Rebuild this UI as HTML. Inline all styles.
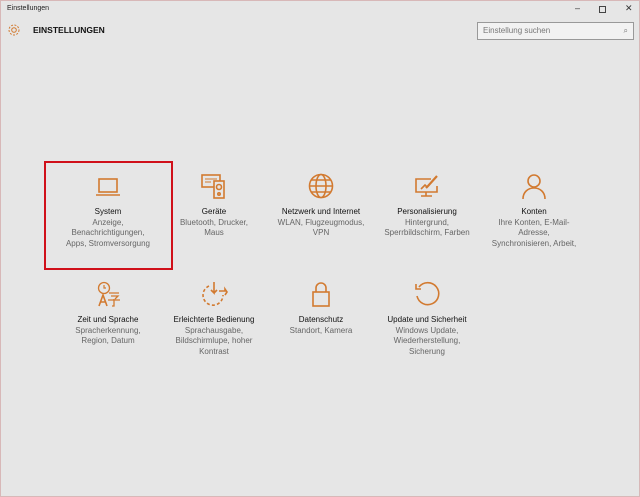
<!DOCTYPE html>
<html><head><meta charset="utf-8"><style>
*{margin:0;padding:0;box-sizing:border-box}
body{width:640px;height:497px;background:#e6e6e6;font-family:"Liberation Sans",sans-serif;position:relative;overflow:hidden;border:1px solid #d8b8b8}
.t{position:absolute;font-size:8px;color:#222}
.tile{position:absolute;width:106px;text-align:center;font-size:8px;line-height:10.5px}
.tile b{font-weight:normal;color:#111;display:block}
.tile span{color:#666}
.tile svg{display:block;margin:0 auto 8px}
svg{fill:none;stroke:#d27a30;stroke-width:1.6}
</style></head><body>
<div class="t" style="left:6px;top:4px;font-size:7px">Einstellungen</div>
<div class="t" style="left:574px;top:2px;font-size:9px;color:#333">–</div>
<div style="position:absolute;left:598px;top:5px;width:7px;height:7px;border:1px solid #444"></div>
<div class="t" style="left:624px;top:2px;font-size:9px;color:#333">✕</div>
<svg style="position:absolute;left:6px;top:22px" width="14" height="14" viewBox="0 0 14 14"><circle cx="7" cy="7" r="2.3" stroke-width="1"/><circle cx="7" cy="7" r="5" stroke-width="1" stroke-dasharray="2 1.4"/></svg>
<div class="t" style="left:32px;top:24px;font-size:8.5px;font-weight:bold;color:#111">EINSTELLUNGEN</div>
<div style="position:absolute;left:476px;top:21px;width:157px;height:18px;border:1px solid #999;background:#f2f2f2;font-size:8px;color:#777;padding:3px 5px">Einstellung suchen<span style="position:absolute;right:5px;top:3px">⌕</span></div>
<div style="position:absolute;left:43px;top:160px;width:129px;height:109px;border:2px solid #d0101a"></div>

<div class="tile" style="left:54px;top:172px"><svg width="28" height="26" viewBox="0 0 28 26"><rect x="5" y="6" width="18" height="13"/><path d="M2 22h24"/></svg><b>System</b><span>Anzeige,<br>Benachrichtigungen,<br>Apps, Stromversorgung</span></div>
<div class="tile" style="left:160px;top:172px"><svg width="28" height="26" viewBox="0 0 28 26"><rect x="2" y="2" width="18" height="12"/><rect x="14" y="8" width="10" height="17" fill="#e6e6e6"/><circle cx="19" cy="14" r="2.5"/><circle cx="19" cy="21" r="1.2"/><path d="M5 6h12M5 9h6" stroke-width="1"/></svg><b>Geräte</b><span>Bluetooth, Drucker,<br>Maus</span></div>
<div class="tile" style="left:267px;top:172px"><svg width="28" height="26" viewBox="0 0 28 26"><circle cx="14" cy="13" r="11.5"/><ellipse cx="14" cy="13" rx="5" ry="11.5"/><path d="M2.5 13h23M4 7h20M4 19h20"/></svg><b>Netzwerk und Internet</b><span>WLAN, Flugzeugmodus,<br>VPN</span></div>
<div class="tile" style="left:373px;top:172px"><svg width="28" height="26" viewBox="0 0 28 26"><path d="M18 6H3v13h21v-6M13 19v4M8 23h11"/><path d="M24 3l-9 10-2 2" stroke-width="2.2"/><path d="M8 16l4-4 2 2"/></svg><b>Personalisierung</b><span>Hintergrund,<br>Sperrbildschirm, Farben</span></div>
<div class="tile" style="left:480px;top:172px"><svg width="28" height="26" viewBox="0 0 28 26"><circle cx="14" cy="8" r="6"/><path d="M3 26c0-7 5-11 11-11s11 4 11 11"/></svg><b>Konten</b><span>Ihre Konten, E-Mail-<br>Adresse,<br>Synchronisieren, Arbeit,</span></div>

<div class="tile" style="left:54px;top:280px"><svg width="28" height="26" viewBox="0 0 28 26"><circle cx="10" cy="7" r="5.5" stroke-width="1.3"/><path d="M10 4v3h2" stroke-width="1.2"/><path d="M5 25l4-11 4 11M6.5 21h5"/><path d="M15 12h10M17 15h7l-3 3M14 19h12M20 18v7l-2 0" stroke-width="1.3"/></svg><b>Zeit und Sprache</b><span>Spracherkennung,<br>Region, Datum</span></div>
<div class="tile" style="left:160px;top:280px"><svg width="28" height="26" viewBox="0 0 28 26"><path d="M14 1v11l-3-3M14 12l3-3"/><path d="M9 5a10 10 0 1 0 14 9" stroke-dasharray="3 2.2"/><path d="M19 10h6v-2l2 3-2 3" /></svg><b>Erleichterte Bedienung</b><span>Sprachausgabe,<br>Bildschirmlupe, hoher<br>Kontrast</span></div>
<div class="tile" style="left:267px;top:280px"><svg width="28" height="26" viewBox="0 0 28 26"><rect x="6" y="11" width="16" height="14"/><path d="M9 11V7a5 5 0 0 1 10 0v4"/></svg><b>Datenschutz</b><span>Standort, Kamera</span></div>
<div class="tile" style="left:373px;top:280px"><svg width="28" height="26" viewBox="0 0 28 26"><path d="M6 6a11 11 0 1 1-2 9"/><path d="M3 3v5h5"/></svg><b>Update und Sicherheit</b><span>Windows Update,<br>Wiederherstellung,<br>Sicherung</span></div>
</body></html>
